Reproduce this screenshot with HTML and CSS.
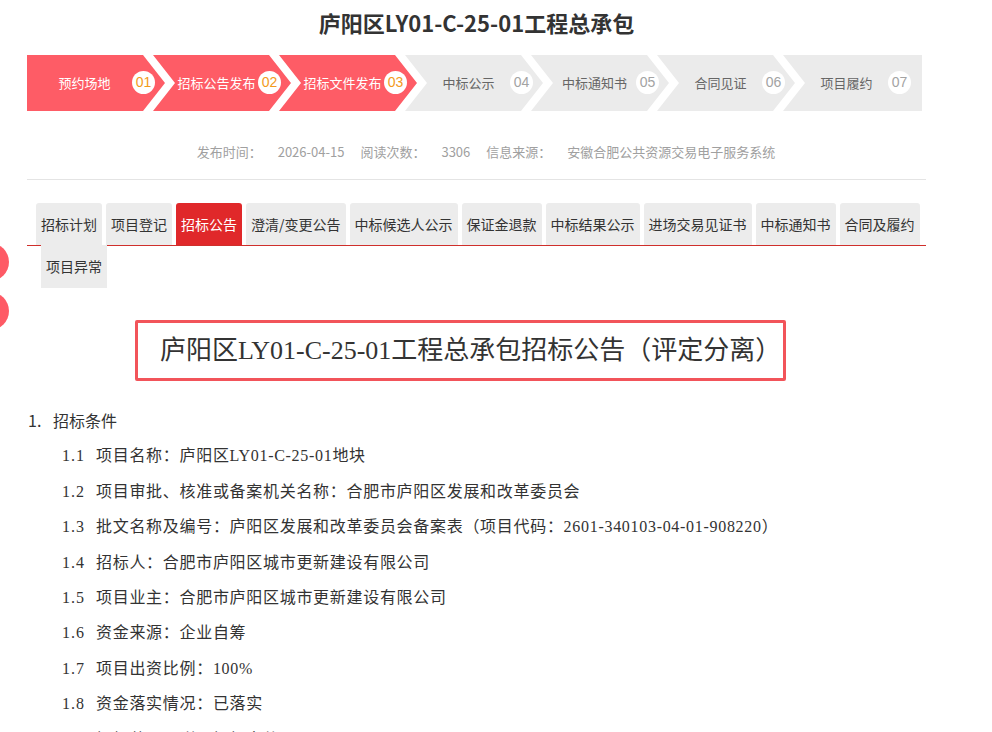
FILE: index.html
```html
<!DOCTYPE html>
<html lang="zh-CN">
<head>
    <meta charset="UTF-8">
    <meta name="viewport" content="width=device-width, initial-scale=1.0">
    <title>庐阳区LY01-C-25-01工程总承包</title>
    <link rel="stylesheet" href="styles.css">
</head>
<body>
    <div class="side-btn side-btn-top"></div>
    <div class="side-btn side-btn-bottom"></div>

    <div class="page">
        <h1 class="title">庐阳区LY01-C-25-01工程总承包</h1>

        <div class="steps">
            <div class="step step-first done"><span class="step-name">预约场地</span><span class="step-num">01</span></div>
            <div class="step done"><span class="step-name">招标公告发布</span><span class="step-num">02</span></div>
            <div class="step done"><span class="step-name">招标文件发布</span><span class="step-num">03</span></div>
            <div class="step"><span class="step-name">中标公示</span><span class="step-num">04</span></div>
            <div class="step"><span class="step-name">中标通知书</span><span class="step-num">05</span></div>
            <div class="step"><span class="step-name">合同见证</span><span class="step-num">06</span></div>
            <div class="step step-last"><span class="step-name">项目履约</span><span class="step-num">07</span></div>
        </div>

        <div class="meta">
            <span class="meta-item"><span class="meta-label">发布时间：</span><span class="meta-value">2026-04-15</span></span>
            <span class="meta-item"><span class="meta-label">阅读次数：</span><span class="meta-value">3306</span></span>
            <span class="meta-item"><span class="meta-label">信息来源：</span><span class="meta-value">安徽合肥公共资源交易电子服务系统</span></span>
        </div>

        <div class="tabs">
            <a class="tab">招标计划</a>
            <a class="tab">项目登记</a>
            <a class="tab active">招标公告</a>
            <a class="tab">澄清/变更公告</a>
            <a class="tab">中标候选人公示</a>
            <a class="tab">保证金退款</a>
            <a class="tab">中标结果公示</a>
            <a class="tab">进场交易见证书</a>
            <a class="tab">中标通知书</a>
            <a class="tab">合同及履约</a>
            <a class="tab tab-wrap">项目异常</a>
        </div>

        <div class="notice-title">庐阳区LY01-C-25-01工程总承包招标公告（评定分离）</div>

        <div class="article">
            <p class="section"><span class="section-num">1.</span>招标条件</p>
            <p class="item"><span class="num">1.1</span>项目名称：庐阳区LY01-C-25-01地块</p>
            <p class="item"><span class="num">1.2</span>项目审批、核准或备案机关名称：合肥市庐阳区发展和改革委员会</p>
            <p class="item"><span class="num">1.3</span>批文名称及编号：庐阳区发展和改革委员会备案表（项目代码：2601-340103-04-01-908220）</p>
            <p class="item"><span class="num">1.4</span>招标人：合肥市庐阳区城市更新建设有限公司</p>
            <p class="item"><span class="num">1.5</span>项目业主：合肥市庐阳区城市更新建设有限公司</p>
            <p class="item"><span class="num">1.6</span>资金来源：企业自筹</p>
            <p class="item"><span class="num">1.7</span>项目出资比例：100%</p>
            <p class="item"><span class="num">1.8</span>资金落实情况：已落实</p>
            <p class="item"><span class="num">1.9</span>招标范围：详见招标文件</p>
        </div>
    </div>
</body>
</html>
```

FILE: styles.css
```css
body {
    margin: 0;
    font-family: "Noto Sans CJK SC", sans-serif;
    color: #333;
    background-color: #fff;
    overflow: hidden;
}
.page {
    width: 899px;
    margin-left: 27px;
}
.title {
    margin: 0;
    font-size: 22px;
    line-height: 44px;
    font-weight: bold;
    text-align: center;
    color: #333;
}

/* progress steps */
.steps {
    display: flex;
    width: 895px;
    height: 56px;
    margin-top: 11px;
}
.step {
    display: flex;
    align-items: center;
    flex: none;
    width: 138px;
    height: 56px;
    margin-left: -12px;
    padding-left: 22px;
    padding-bottom: 2px;
    box-sizing: border-box;
    background-color: #ebebeb;
    color: #666;
    font-size: 13px;
    clip-path: polygon(0 0, 116px 0, 100% 50%, 116px 100%, 0 100%, 22px 50%);
}
.step-first {
    margin-left: 0;
    padding-left: 10px;
    clip-path: polygon(0 0, 116px 0, 100% 50%, 116px 100%, 0 100%);
}
.step-last {
    width: 139px;
    clip-path: polygon(0 0, 100% 0, 100% 100%, 0 100%, 22px 50%);
}
.step.done {
    background-color: #fe5c66;
    color: #fff;
}
.step-name {
    flex: 1;
    text-align: center;
    white-space: nowrap;
}
.step-num {
    width: 23px;
    height: 23px;
    margin-right: 10px;
    border-radius: 50%;
    background-color: #fff;
    color: #a3a3a3;
    font-family: "Liberation Sans", sans-serif;
    font-size: 14px;
    line-height: 23px;
    text-align: center;
}
.step.done .step-num {
    color: #f39a1c;
}
.step-last .step-num {
    margin-right: 11px;
}

/* info line */
.meta {
    display: flex;
    justify-content: center;
    gap: 16px;
    margin-top: 31px;
    padding-left: 19px;
    font-size: 13px;
    line-height: 20px;
    color: #a0a0a0;
}
.meta-value {
    margin-left: 16px;
}

/* tabs */
.tabs {
    display: flex;
    flex-wrap: wrap;
    align-content: flex-start;
    gap: 0 4px;
    height: 42px;
    margin-top: 17px;
    padding-left: 9px;
    border-top: 1px solid #e4e4e4;
    padding-top: 23px;
    border-bottom: 1px solid #cf2f2b;
}
.tab {
    height: 42px;
    padding: 0 5px;
    border-radius: 3px 3px 0 0;
    background-color: #ececec;
    font-size: 14px;
    line-height: 42px;
    color: #333;
    cursor: pointer;
}
.tab.active {
    background-color: #e0282a;
    color: #fff;
}
.tab-wrap {
    height: 43px;
    margin-left: 5px;
    border-radius: 0;
    line-height: 43px;
}

/* notice */
.notice-title {
    display: inline-block;
    margin: 74px 0 0 108px;
    padding: 0 2px 0 22px;
    height: 55px;
    border: 3px solid #f2545a;
    border-radius: 2px;
    font-family: "Liberation Serif", "Noto Sans CJK SC", serif;
    font-size: 26px;
    line-height: 55px;
    color: #333;
    white-space: nowrap;
}
.article {
    margin-top: 22px;
}
.article p {
    margin: 0;
    height: 35.4px;
    line-height: 35.4px;
    white-space: nowrap;
}
.section {
    padding-left: 1px;
    font-size: 16px;
}
.section-num {
    display: inline-block;
    width: 25px;
}
.item {
    padding-left: 35px;
    font-family: "Liberation Serif", "Noto Sans CJK SC", serif;
    font-size: 16px;
    letter-spacing: 0.7px;
    color: #333;
}
.item .num {
    display: inline-block;
    width: 34px;
    letter-spacing: 1px;
}

/* floating side buttons */
.side-btn {
    position: fixed;
    left: -29px;
    width: 38px;
    height: 38px;
    border-radius: 50%;
    background-color: #fe5a65;
}
.side-btn-top {
    top: 243px;
}
.side-btn-bottom {
    top: 292px;
}
```
